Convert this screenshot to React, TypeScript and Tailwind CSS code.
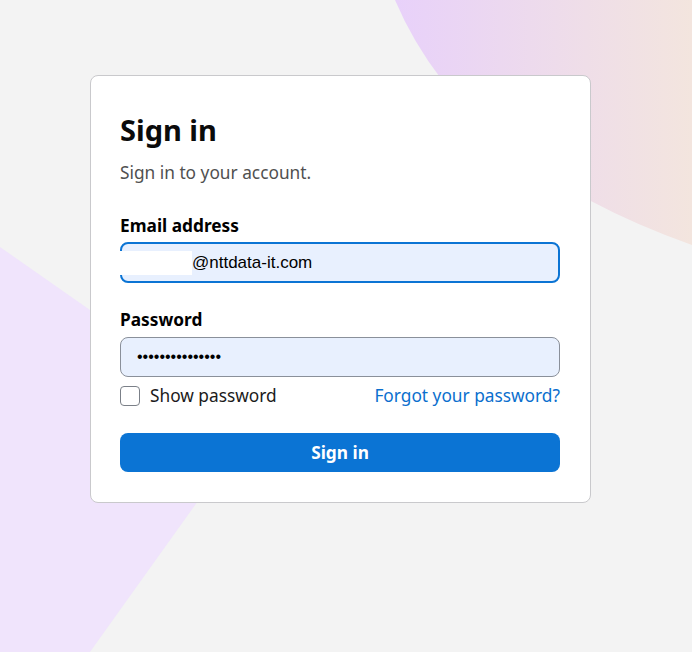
import React from 'react';

const font = { fontFamily: '"Noto Sans", "Open Sans", sans-serif' };
const arial = { fontFamily: '"Liberation Sans", Arial, sans-serif' };

const Backdrop: React.FC = () => (
  <svg className="absolute inset-0 h-full w-full" viewBox="0 0 692 652" preserveAspectRatio="none">
    <defs>
      <linearGradient id="warm" x1="0" y1="0" x2="1" y2="0">
        <stop offset="0%" stopColor="#e8d1fa" />
        <stop offset="100%" stopColor="#f3e5de" />
      </linearGradient>
    </defs>
    <path d="M395,0 Q465,165 692,245 L692,0 Z" fill="url(#warm)" />
    <path d="M0,247 L253,424 L90,652 L0,652 Z" fill="#f0e4fc" />
  </svg>
);

export default function App() {
  return (
    <div className="relative h-[652px] w-[692px] overflow-hidden bg-[#f3f3f3]" style={font}>
      <Backdrop />
      <div className="relative pl-[90px] pt-[75px]">
        <div className="w-[501px] rounded-lg border border-[#c9c9cc] bg-white pb-[30px] pl-[29px] pr-[30px] pt-[36px]">
          <h1 className="text-[29px] font-bold leading-9 text-[#0b0b0b]">Sign in</h1>
          <p className="mt-[13px] text-[17.3px] leading-6 text-[#505050]">Sign in to your account.</p>

          <label className="mt-[29px] block text-[17.3px] font-bold leading-6 text-black">Email address</label>
          <div className="mt-[4px] flex h-[41px] items-center rounded-lg border-2 border-[#0b74d4] bg-[#e8f0fe]">
            <span className="-ml-[2px] h-[24px] w-[72px] bg-white" />
            <span className="text-[17px] text-black" style={arial}>
              @nttdata-it.com
            </span>
          </div>

          <label className="mt-[25px] block text-[17.3px] font-bold leading-6 text-black">Password</label>
          <div className="mt-[5px] flex h-[40px] items-center rounded-lg border border-[#8a909a] bg-[#e8f0fe] px-[16px]">
            <span className="text-[16px] text-black" style={arial}>
              •••••••••••••••
            </span>
          </div>

          <div className="mt-[7px] flex items-center justify-between">
            <label className="flex items-center gap-[10px] text-[17.3px] leading-6 text-[#1b1b1b]">
              <span className="h-[20px] w-[20px] rounded-[4px] border border-[#7b8088] bg-white" />
              Show password
            </label>
            <a className="text-[17.3px] leading-6 text-[#0b6fce]">Forgot your password?</a>
          </div>

          <button className="mt-[25px] h-[39px] w-full rounded-lg bg-[#0b74d4] text-[17.3px] font-bold text-white">
            Sign in
          </button>
        </div>
      </div>
    </div>
  );
}
